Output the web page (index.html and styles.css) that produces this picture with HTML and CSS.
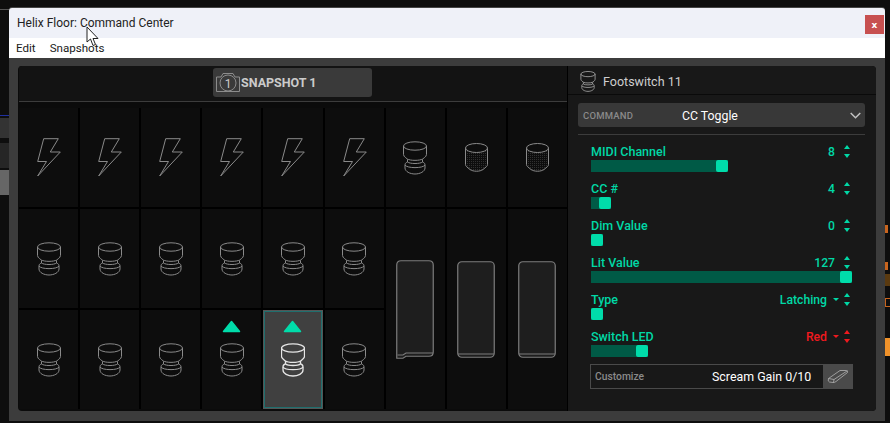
FILE: index.html
```html
<!DOCTYPE html>
<html lang="en">

<head>
    <meta charset="UTF-8">
    <meta name="viewport" content="width=device-width, initial-scale=1.0">
    <title>Helix Floor: Command Center</title>
    <link rel="stylesheet" href="styles.css">
</head>

<body>
    <svg class="defs" width="0" height="0">
        <defs>
            <pattern id="dots" width="2" height="2" patternUnits="userSpaceOnUse">
                <rect width="1" height="1" fill="#303030" />
            </pattern>
        </defs>
        <symbol id="bolt" viewBox="0 0 24 39">
            <path d="M6.700 .7H21.300L13.300 14H23.300L.7 38L9.500 23.500H.7Z" />
        </symbol>
        <symbol id="switch" viewBox="0 0 24 34">
            <ellipse cx="12" cy="5" rx="11.500" ry="4.200" />
            <path d="M.5 5V13.500C.5 16 4.500 17.500 4.500 18.500V21M23.500 5V13.500C23.500 16 19.500 17.500 19.500 18.500V21" />
            <path d="M4.500 18C7 19.800 17 19.800 19.500 18" />
            <path d="M4.500 21C7 23 17 23 19.500 21" />
            <path d="M2 24C4 27.500 20 27.500 22 24" />
            <path d="M4.500 21C2.500 21.500 2 23 2 24V27C2 30.500 7 33 12 33C17 33 22 30.500 22 27V24C22 23 21.500 21.500 19.500 21" />
        </symbol>
        <symbol id="knob" viewBox="0 0 23 29">
            <path d="M.5 5V21.500C.5 22.500 1 23.200 2 24L5 26.500C8 28.800 15 28.800 18 26.500L21 24C22 23.200 22.500 22.500 22.500 21.500V5Z" fill="url(#dots)" />
            <ellipse cx="11.500" cy="5" rx="11" ry="4.500" fill="#0d0d0d" />
        </symbol>
        <symbol id="pedal" viewBox="0 0 38 97">
            <rect x=".75" y=".75" width="36.500" height="95.500" rx="4" />
            <path d="M1 93H37" />
        </symbol>
        <symbol id="pedal-notched" viewBox="0 0 38 99">
            <path d="M.75 5Q.75 .75 5 .75H33Q37.250 .75 37.250 5V92Q37.250 96.250 33 96.250H10L7 98.250H.75Z" />
            <path d="M1.500 95H7L10 93H37" />
        </symbol>
        <symbol id="arrow" viewBox="0 0 19 13">
            <path d="M9.500 1.500L17.500 11.500H1.500Z" />
        </symbol>
    </svg>

    <!-- bits of the application behind the window -->
    <div class="backdrop">
        <div class="bit line-top"></div>
        <div class="bit line-blue"></div>
        <div class="bit block-a"></div>
        <div class="bit block-b"></div>
        <div class="bit block-c"></div>
        <div class="bit orange-a"></div>
        <div class="bit orange-b"></div>
        <div class="bit brown"></div>
        <div class="bit orange-c"></div>
        <div class="bit orange-d"></div>
    </div>

    <svg class="cursor" width="13" height="21" viewBox="0 0 13 21">
        <path d="M1 1V16L4.500 13L7 19.500L9.500 18.500L7 12.500H12Z" />
    </svg>

    <div class="window">
        <div class="titlebar">
            <span>Helix Floor: Command Center</span>
            <button class="close" type="button">x</button>
        </div>
        <div class="menubar">
            <span>Edit</span>
            <span>Snapshots</span>
        </div>

        <div class="content">
            <div class="panel">
                <div class="left">
                    <div class="snapbar">
                        <div class="snapshot">
                            <svg class="camera" width="24" height="19" viewBox="0 0 24 19">
                                <path d="M.5 4H5L7 .5H17L19 4H23.500V18.500H.5Z" />
                                <circle cx="12" cy="10" r="8" />
                                <text x="12" y="14.500">1</text>
                            </svg>
                            <span>SNAPSHOT 1</span>
                        </div>
                    </div>
                    <div class="grid">
                        <div class="cell"><svg class="icon bolt"><use href="#bolt" /></svg></div>
                        <div class="cell"><svg class="icon bolt"><use href="#bolt" /></svg></div>
                        <div class="cell"><svg class="icon bolt"><use href="#bolt" /></svg></div>
                        <div class="cell"><svg class="icon bolt"><use href="#bolt" /></svg></div>
                        <div class="cell"><svg class="icon bolt"><use href="#bolt" /></svg></div>
                        <div class="cell"><svg class="icon bolt"><use href="#bolt" /></svg></div>
                        <div class="cell"><svg class="icon switch"><use href="#switch" /></svg></div>
                        <div class="cell"><svg class="icon knob"><use href="#knob" /></svg></div>
                        <div class="cell"><svg class="icon knob"><use href="#knob" /></svg></div>

                        <div class="cell"><svg class="icon switch"><use href="#switch" /></svg></div>
                        <div class="cell"><svg class="icon switch"><use href="#switch" /></svg></div>
                        <div class="cell"><svg class="icon switch"><use href="#switch" /></svg></div>
                        <div class="cell"><svg class="icon switch"><use href="#switch" /></svg></div>
                        <div class="cell"><svg class="icon switch"><use href="#switch" /></svg></div>
                        <div class="cell"><svg class="icon switch"><use href="#switch" /></svg></div>
                        <div class="cell pedal-cell"><svg class="pedal notched"><use href="#pedal-notched" /></svg></div>
                        <div class="cell pedal-cell"><svg class="pedal"><use href="#pedal" /></svg></div>
                        <div class="cell pedal-cell"><svg class="pedal"><use href="#pedal" /></svg></div>

                        <div class="cell"><svg class="icon switch"><use href="#switch" /></svg></div>
                        <div class="cell"><svg class="icon switch"><use href="#switch" /></svg></div>
                        <div class="cell"><svg class="icon switch"><use href="#switch" /></svg></div>
                        <div class="cell">
                            <svg class="arrow"><use href="#arrow" /></svg>
                            <svg class="icon switch"><use href="#switch" /></svg>
                        </div>
                        <div class="cell selected">
                            <svg class="arrow"><use href="#arrow" /></svg>
                            <svg class="icon switch"><use href="#switch" /></svg>
                        </div>
                        <div class="cell"><svg class="icon switch"><use href="#switch" /></svg></div>
                    </div>
                </div>

                <div class="right">
                    <div class="fs-title">
                        <svg class="icon-small"><use href="#switch" /></svg>
                        <span>Footswitch 11</span>
                    </div>
                    <div class="command">
                        <span class="command-label">COMMAND</span>
                        <span class="command-value">CC Toggle</span>
                        <svg class="chevron" width="11" height="7" viewBox="0 0 11 7">
                            <path d="M.7 1L5.500 5.800L10.300 1" />
                        </svg>
                    </div>
                    <div class="params">
                        <div class="param">
                            <div class="param-head">
                                <span>MIDI Channel</span>
                                <span class="value">8</span>
                                <span class="stepper"><i class="up"></i><i class="down"></i></span>
                            </div>
                            <div class="fill" style="width: 137px"></div>
                        </div>
                        <div class="param">
                            <div class="param-head">
                                <span>CC #</span>
                                <span class="value">4</span>
                                <span class="stepper"><i class="up"></i><i class="down"></i></span>
                            </div>
                            <div class="fill" style="width: 20px"></div>
                        </div>
                        <div class="param">
                            <div class="param-head">
                                <span>Dim Value</span>
                                <span class="value">0</span>
                                <span class="stepper"><i class="up"></i><i class="down"></i></span>
                            </div>
                            <div class="fill" style="width: 12px"></div>
                        </div>
                        <div class="param">
                            <div class="param-head">
                                <span>Lit Value</span>
                                <span class="value">127</span>
                                <span class="stepper"><i class="up"></i><i class="down"></i></span>
                            </div>
                            <div class="fill" style="width: 261px"></div>
                        </div>
                        <div class="param">
                            <div class="param-head">
                                <span>Type</span>
                                <span class="value">Latching</span>
                                <i class="caret"></i>
                                <span class="stepper"><i class="up"></i><i class="down"></i></span>
                            </div>
                            <div class="fill" style="width: 12px"></div>
                        </div>
                        <div class="param red">
                            <div class="param-head">
                                <span>Switch LED</span>
                                <span class="value">Red</span>
                                <i class="caret"></i>
                                <span class="stepper"><i class="up"></i><i class="down"></i></span>
                            </div>
                            <div class="fill" style="width: 57px"></div>
                        </div>
                    </div>
                    <div class="customize">
                        <span class="customize-label">Customize</span>
                        <span class="customize-value">Scream Gain 0/10</span>
                        <span class="eraser">
                            <svg width="22" height="15" viewBox="0 0 22 15">
                                <path d="M1.500 9.500L13 1.500H19.500Q21 2 20.500 3.500L9 12.500Q8 13.500 6 13.500L2.500 13Q.5 12.500 1.500 9.500Z" />
                                <path d="M1.500 9.500L7 10.500L20.500 1.700M7 10.500L6.500 13.500" />
                            </svg>
                        </span>
                    </div>
                </div>
            </div>
        </div>
    </div>
</body>

</html>
```

FILE: styles.css
```css
* {
    margin: 0;
    padding: 0;
    box-sizing: border-box;
}

html,
body {
    height: 100%;
    overflow: hidden;
}

body {
    background-color: #0e0e0e;
    font-family: Roboto, "Liberation Sans", sans-serif;
    padding: 8px 5px 2px 9px;
}

.defs {
    position: absolute;
}

/* Backdrop: what shows of the other app round the window */
.bit {
    position: absolute;
}

.line-top {
    left: 0;
    top: 9px;
    width: 9px;
    height: 1px;
    background-color: #555;
}

.line-blue {
    left: 0;
    top: 115px;
    width: 9px;
    height: 1px;
    background-color: #2030a0;
}

.block-a {
    left: 0;
    top: 118px;
    width: 9px;
    height: 20px;
    background-color: #333;
}

.block-b {
    left: 0;
    top: 143px;
    width: 9px;
    height: 25px;
    background-color: #262626;
}

.block-c {
    left: 0;
    top: 170px;
    width: 9px;
    height: 25px;
    background-color: #666;
}

.orange-a {
    left: 885px;
    top: 225px;
    width: 3px;
    height: 8px;
    background-color: #c8641e;
}

.orange-b {
    left: 885px;
    top: 262px;
    width: 3px;
    height: 8px;
    background-color: #c8641e;
}

.brown {
    left: 885px;
    top: 274px;
    width: 5px;
    height: 12px;
    background-color: #5a3a10;
}

.orange-c {
    left: 885px;
    top: 298px;
    width: 5px;
    height: 9px;
    border: 1px solid #c8641e;
    border-right: none;
}

.orange-d {
    left: 885px;
    top: 338px;
    width: 5px;
    height: 18px;
    background-color: #f0922a;
}

/* Mouse pointer captured with the screenshot */
.cursor {
    position: absolute;
    left: 86px;
    top: 26px;
    z-index: 5;
    fill: #fff;
    stroke: #222;
    stroke-width: 1;
}

/* Window */
.window {
    position: relative;
    height: 413px;
    display: flex;
    flex-direction: column;
    background-color: #3c3c3c;
    border-radius: 3px 3px 0 0;
    box-shadow: 0 -1px 0 #444;
    overflow: hidden;
}

.titlebar {
    height: 30px;
    flex-shrink: 0;
    background-color: #eff1f8;
    display: flex;
    align-items: center;
    justify-content: space-between;
    padding-left: 8px;
    padding-right: 1px;
    font-size: 12px;
    color: #222;
}

.close {
    width: 19px;
    height: 19px;
    margin-top: 3px;
    border: none;
    background-color: #c75050;
    color: #fff;
    font-family: "DejaVu Sans", sans-serif;
    font-size: 9px;
    font-weight: bold;
}

.menubar {
    height: 20px;
    flex-shrink: 0;
    background-color: #fff;
    display: flex;
    align-items: center;
    gap: 14px;
    padding-left: 7px;
    font-size: 11.600px;
    color: #1a1a1a;
}

.content {
    flex: 1;
    padding: 8px 9px 10px;
    min-height: 0;
}

.panel {
    height: 100%;
    display: flex;
    background-color: #0b0b0b;
    border-radius: 4px;
    overflow: hidden;
}

/* Left side */
.left {
    width: 549px;
    flex-shrink: 0;
    padding-left: 1px;
    display: flex;
    flex-direction: column;
}

.snapbar {
    height: 36px;
    flex-shrink: 0;
    display: flex;
    justify-content: center;
    align-items: flex-start;
    padding-top: 2px;
    border-bottom: 1px solid #3c3c3c;
    background-color: #131313;
}

.snapshot {
    width: 159px;
    height: 29px;
    margin-left: -1px;
    background-color: #3a3a3a;
    border-radius: 3px;
    display: flex;
    align-items: center;
    gap: 1px;
    padding-left: 3px;
    color: #cbcbcb;
    font-size: 12.5px;
    font-weight: bold;
}

.camera {
    fill: none;
    stroke: #8c8c8c;
    stroke-width: 1;
}

.camera text {
    fill: #cbcbcb;
    stroke: none;
    font-size: 12px;
    font-weight: normal;
    text-anchor: middle;
}

.grid {
    margin-top: 6px;
    display: grid;
    grid-template-columns: repeat(9, 1fr);
    grid-template-rows: 99px 99px 99px;
    gap: 2px;
    background-color: #000;
}

.cell {
    background-color: #0d0d0d;
    position: relative;
    display: flex;
    align-items: center;
    justify-content: center;
}

.pedal-cell {
    grid-row: span 2;
}

.icon {
    fill: none;
    stroke: #8a8a8a;
    stroke-width: 1;
}

.icon.bolt {
    width: 24px;
    height: 39px;
    margin-left: 1px;
}

.icon.switch {
    width: 24px;
    height: 34px;
}

.icon.knob {
    width: 23px;
    height: 29px;
}

.arrow {
    position: absolute;
    top: 10px;
    left: 50%;
    margin-left: -9.500px;
    width: 19px;
    height: 13px;
    fill: #00dcaa;
    stroke: #00dcaa;
    stroke-width: 1.500;
    stroke-linejoin: round;
}

.selected {
    background-color: #404040;
    border: 1px solid #555;
    box-shadow: inset 0 0 0 1px #1f6f6e;
}

.selected .arrow {
    top: 9px;
}

.selected .icon {
    stroke: #e6e6e6;
    stroke-width: 1.300;
}

.pedal {
    width: 38px;
    height: 97px;
    fill: #1e1e1e;
    stroke: #7c7c7c;
    stroke-width: 1.200;
}

.pedal.notched {
    height: 99px;
    margin-top: 1px;
}

/* Right side */
.right {
    flex: 1;
    min-width: 0;
    background-color: #181818;
    border-left: 1px solid #000;
}

.fs-title {
    height: 29px;
    display: flex;
    align-items: center;
    gap: 7px;
    padding: 2px 0 0 12px;
    border-bottom: 1px solid #0a0a0a;
    color: #cfcfcf;
    font-size: 12.5px;
}

.icon-small {
    width: 16px;
    height: 21px;
    fill: none;
    stroke: #aaa;
    stroke-width: 1.300;
}

.command {
    height: 24px;
    margin: 8px 11px 0 10px;
    background-color: #383838;
    border-radius: 3px;
    display: flex;
    align-items: center;
    padding: 1px 4px 0 5px;
}

.command-label {
    width: 99px;
    color: #8a8a8a;
    font-size: 9.500px;
    font-weight: 500;
    letter-spacing: .2px;
}

.command-value {
    flex: 1;
    color: #fff;
    font-size: 12.300px;
}

.chevron {
    fill: none;
    stroke: #c0c0c0;
    stroke-width: 1.500;
}

.params {
    margin: 7px 11px 0 10px;
    padding: 8px 13px 0 13px;
    border-top: 1px solid #3c3c3c;
    display: flex;
    flex-direction: column;
    gap: 8px;
}

.param {
    color: #00d8a6;
    font-size: 12.500px;
    font-weight: 500;
}

.param-head {
    height: 17px;
    display: flex;
    align-items: center;
    padding-right: 1px;
}

.param-head span:first-child {
    flex: 1;
}

.value {
    margin-right: 9px;
    font-size: 12.200px;
}

.stepper {
    width: 7px;
    display: flex;
    flex-direction: column;
    gap: 5px;
}

.stepper i {
    display: block;
    width: 0;
    height: 0;
    border-left: 3.500px solid transparent;
    border-right: 3.500px solid transparent;
}

.stepper .up {
    border-bottom: 4px solid #00d8a6;
}

.stepper .down {
    border-top: 4px solid #00d8a6;
}

.caret {
    width: 0;
    height: 0;
    margin-right: 5px;
    margin-left: -3px;
    border-left: 3.500px solid transparent;
    border-right: 3.500px solid transparent;
    border-top: 3.500px solid #00d8a6;
}

.red .value {
    color: #f0191e;
}

.red .caret {
    border-top-color: #f0191e;
}

.red .stepper .up {
    border-bottom-color: #f0191e;
}

.red .stepper .down {
    border-top-color: #f0191e;
}

.fill {
    height: 12px;
    background-color: #005a46;
    position: relative;
}

/* Thumb sits on the end of the fill */
.fill::after {
    content: "";
    position: absolute;
    right: 0;
    top: 0;
    width: 12px;
    height: 12px;
    border-radius: 2px;
    background-color: #00dcaa;
}

.customize {
    height: 25px;
    margin: 7px 23px 0 22px;
    border: 1px solid #4a4a4a;
    display: flex;
    align-items: center;
}

.customize-label {
    width: 121px;
    padding-left: 4px;
    color: #8a8a8a;
    font-size: 10.300px;
    font-weight: 500;
}

.customize-value {
    flex: 1;
    color: #fff;
    font-size: 12.400px;
}

.eraser {
    width: 30px;
    height: 25px;
    margin-right: -1px;
    background-color: #4a4a4a;
    display: flex;
    align-items: center;
    justify-content: center;
}

.eraser svg {
    fill: none;
    stroke: #b4b4b4;
    stroke-width: .8;
}
```
